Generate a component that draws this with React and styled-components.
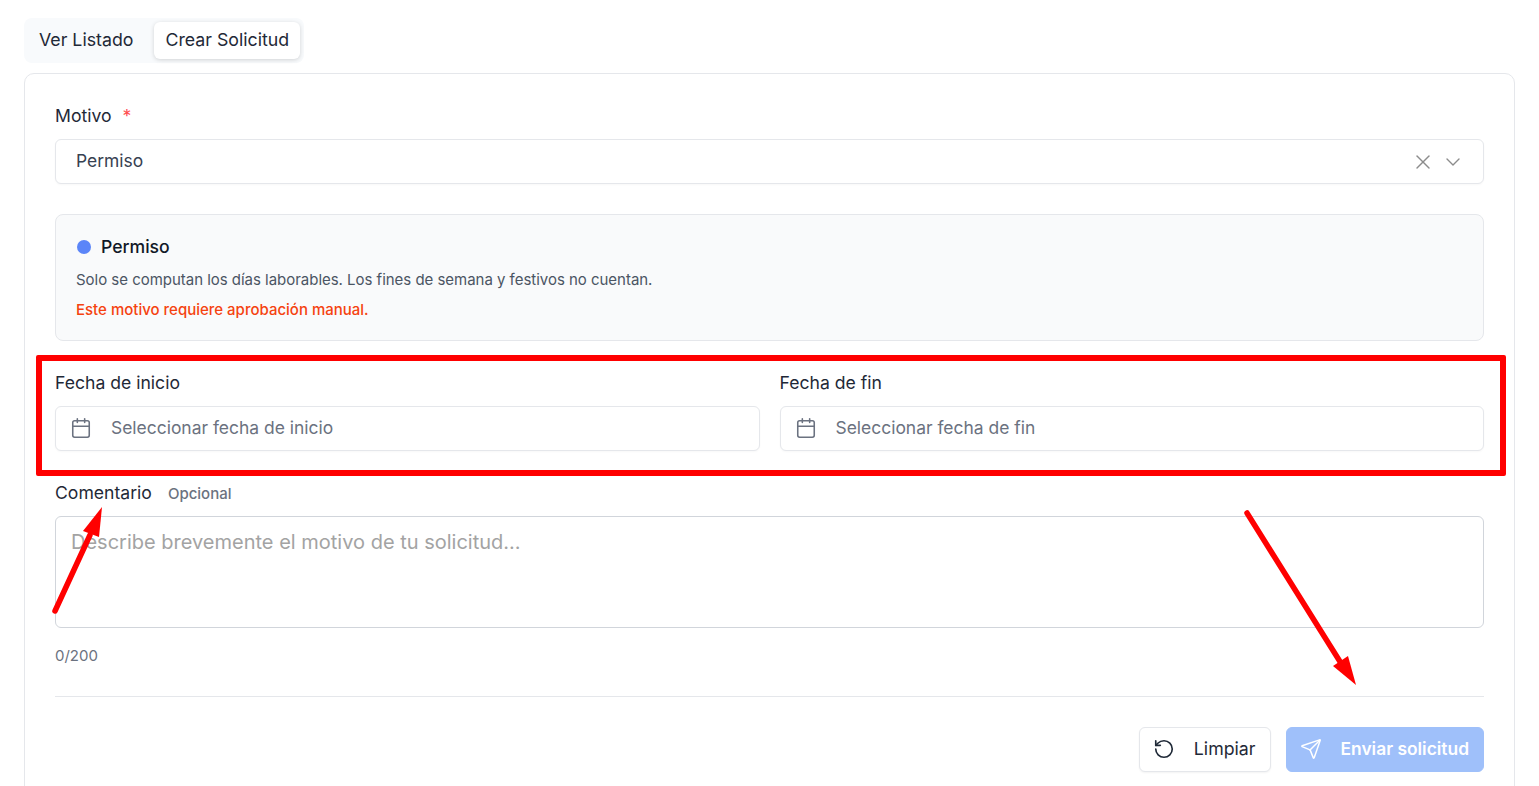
import React from "react";
import styled, { createGlobalStyle } from "styled-components";
import { X, ChevronDown, Calendar, RotateCcw, Send } from "lucide-react";

const GlobalStyle = createGlobalStyle`
  html, body {
    margin: 0;
    height: 100%;
    overflow: hidden;
    background: #fff;
    font-family: Inter, "Liberation Sans", sans-serif;
  }
  * { box-sizing: border-box; }
`;

const Page = styled.div`
  position: relative;
  width: 1539px;
  height: 786px;
  overflow: hidden;
  padding: 18px 24px 0;
`;

const Tabs = styled.div`
  display: inline-flex;
  align-items: center;
  gap: 10px;
  height: 45px;
  padding: 4px;
  border-radius: 8px;
  background: #f8fafc;
`;

const Tab = styled.div`
  display: flex;
  align-items: center;
  height: 37px;
  padding: 0 11px 2px;
  border-radius: 6px;
  font-size: 17.75px;
  color: #1f2937;
  background: ${(p) => (p.$active ? "#fff" : "transparent")};
  box-shadow: ${(p) => (p.$active ? "0 1px 4px rgba(0, 0, 0, 0.16)" : "none")};
`;

const Card = styled.div`
  margin-top: 10px;
  height: 760px;
  padding: 30px;
  border: 1px solid #e5e7eb;
  border-radius: 10px;
  background: #fff;
`;

const Label = styled.div`
  display: flex;
  align-items: center;
  height: 24px;
  padding-bottom: 2px;
  font-size: 17.6px;
  color: #1f2937;
`;

const Required = styled.span`
  margin-left: 11px;
  color: #ff4d4f;
  font-size: 17.6px;
`;

const Optional = styled.span`
  margin: 2px 0 0 16px;
  font-size: 15px;
  font-weight: 500;
  color: #6b7280;
`;

const Field = styled.div`
  display: flex;
  align-items: center;
  height: 45px;
  margin-top: 11px;
  padding: 0 ${(p) => (p.$select ? "18px 2px 20px" : "14px 2px")};
  border: 1px solid #e5e7eb;
  border-radius: 6px;
  background: #fff;
  box-shadow: 0 1px 2px rgba(0, 0, 0, 0.03);
  font-size: 17.45px;
  color: ${(p) => (p.$select ? "#374151" : "#6b7280")};
`;

const FieldText = styled.span`
  flex: 1;
  margin-left: ${(p) => (p.$icon ? "19px" : "0")};
`;

const SelectIcons = styled.div`
  display: flex;
  align-items: center;
  gap: 6px;
  margin-bottom: -2px;
  color: #8c8c8c;
`;

const FieldIcon = styled(Calendar)`
  flex-shrink: 0;
`;

const InfoBox = styled.div`
  height: 127px;
  margin-top: 30px;
  padding: 20px;
  border: 1px solid #e5e7eb;
  border-radius: 8px;
  background: #f9fafb;
`;

const InfoTitle = styled.div`
  display: flex;
  align-items: center;
  gap: 10px;
  height: 24px;
  padding-bottom: 1px;
  font-size: 17.6px;
  font-weight: 500;
  color: #111827;
`;

const Dot = styled.span`
  width: 14px;
  height: 14px;
  margin: 1px 0 0 1px;
  border-radius: 50%;
  background: #5b85f8;
`;

const InfoLine = styled.div`
  margin-top: ${(p) => p.$gap}px;
  font-size: 15px;
  line-height: 22px;
  letter-spacing: ${(p) => (p.$weight ? "0" : "-0.025px")};
  font-weight: ${(p) => p.$weight || 400};
  color: ${(p) => p.$color};
`;

const DateRow = styled.div`
  display: grid;
  grid-template-columns: 1fr 1fr;
  gap: 20px;
  margin-top: 30px;
`;

const CommentBlock = styled.div`
  margin-top: 30px;
`;

const TextArea = styled.div`
  height: 112px;
  margin-top: 11px;
  padding: 12px 15px;
  border: 1px solid #d1d5db;
  border-radius: 6px;
  font-size: 20px;
  line-height: 26px;
  color: #a3a3a3;
`;

const Counter = styled.div`
  margin-top: 18px;
  font-size: 15px;
  line-height: 20px;
  color: #6b7280;
`;

const Divider = styled.div`
  height: 1px;
  margin-top: 30px;
  background: #e5e7eb;
`;

const Actions = styled.div`
  display: flex;
  justify-content: flex-end;
  gap: 15px;
  margin-top: 30px;
`;

const Button = styled.div`
  display: flex;
  align-items: center;
  gap: 18px;
  height: 45px;
  padding: 0 14px 2px 14px;
  border-radius: 6px;
  font-size: ${(p) => (p.$primary ? "17.4px" : "17.75px")};
  border: 1px solid ${(p) => (p.$primary ? "#9fc0fa" : "#e5e7eb")};
  background: ${(p) => (p.$primary ? "#9fc0fa" : "#fff")};
  color: ${(p) => (p.$primary ? "#fff" : "#1f2937")};
  font-weight: ${(p) => (p.$primary ? 600 : 400)};
  box-shadow: ${(p) => (p.$primary ? "none" : "0 1px 2px rgba(0, 0, 0, 0.05)")};

  svg {
    margin-left: -1px;
    margin-right: 1px;
  }
`;

const Highlight = styled.div`
  position: absolute;
  left: 36px;
  top: 355px;
  width: 1470px;
  height: 121px;
  border: 6px solid #ff0000;
  border-radius: 2px;
`;

const Overlay = styled.svg`
  position: absolute;
  left: 0;
  top: 0;
`;

const App = () => (
  <Page>
    <GlobalStyle />
    <Tabs>
      <Tab>Ver Listado</Tab>
      <Tab $active>Crear Solicitud</Tab>
    </Tabs>
    <Card>
      <Label>
        Motivo <Required>*</Required>
      </Label>
      <Field $select>
        <FieldText>Permiso</FieldText>
        <SelectIcons>
          <X size={24} strokeWidth={1.4} />
          <ChevronDown size={24} strokeWidth={1.4} />
        </SelectIcons>
      </Field>
      <InfoBox>
        <InfoTitle>
          <Dot />
          Permiso
        </InfoTitle>
        <InfoLine $gap={10} $color="#4b5563">
          Solo se computan los días laborables. Los fines de semana y festivos no cuentan.
        </InfoLine>
        <InfoLine $gap={8} $weight={500} $color="#f5420f">
          Este motivo requiere aprobación manual.
        </InfoLine>
      </InfoBox>
      <DateRow>
        <div>
          <Label>Fecha de inicio</Label>
          <Field>
            <FieldIcon size={22} strokeWidth={1.7} />
            <FieldText $icon>Seleccionar fecha de inicio</FieldText>
          </Field>
        </div>
        <div>
          <Label>Fecha de fin</Label>
          <Field>
            <FieldIcon size={22} strokeWidth={1.7} />
            <FieldText $icon>Seleccionar fecha de fin</FieldText>
          </Field>
        </div>
      </DateRow>
      <CommentBlock>
        <Label>
          Comentario <Optional>Opcional</Optional>
        </Label>
        <TextArea>Describe brevemente el motivo de tu solicitud...</TextArea>
        <Counter>0/200</Counter>
      </CommentBlock>
      <Divider />
      <Actions>
        <Button>
          <RotateCcw size={22} strokeWidth={1.8} />
          Limpiar
        </Button>
        <Button $primary>
          <Send size={22} strokeWidth={1.6} />
          Enviar solicitud
        </Button>
      </Actions>
    </Card>
    <Highlight />
    <Overlay width="1539" height="786" viewBox="0 0 1539 786">
      <path d="M55 611 L90 535" stroke="#ff0000" strokeWidth="5.5" strokeLinecap="round" fill="none" />
      <path d="M102 507 L83 531 L99 537 Z" fill="#ff0000" />
      <path d="M1247 513 L1344 668" stroke="#ff0000" strokeWidth="5.5" strokeLinecap="round" fill="none" />
      <path d="M1356 685 L1333 666 L1348 656 Z" fill="#ff0000" />
    </Overlay>
  </Page>
);

export default App;
